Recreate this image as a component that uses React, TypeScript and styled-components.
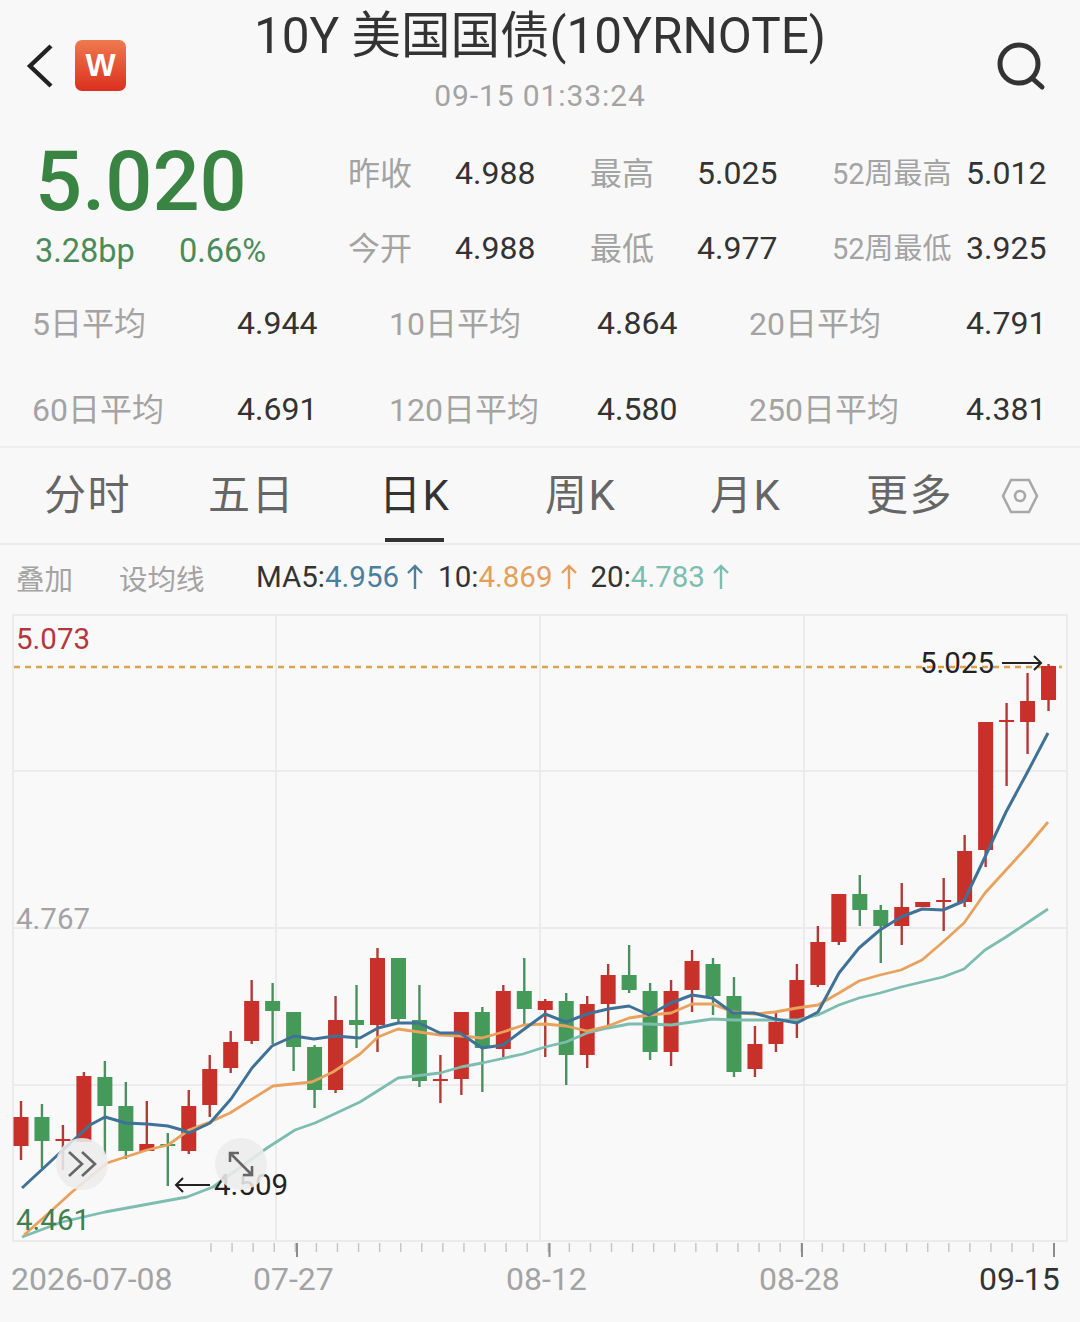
import React from "react";
import styled, { createGlobalStyle } from "styled-components";

const GlobalStyle = createGlobalStyle`
  html, body {
    margin: 0;
    padding: 0;
    background: #f8f8f8;
  }
  * {
    box-sizing: border-box;
  }
`;

const FONT = `Roboto, "Noto Sans CJK SC", sans-serif`;

const Page = styled.div`
  width: 1080px;
  height: 1322px;
  overflow: hidden;
  background: #f8f8f8;
  font-family: ${FONT};
  color: #333;
`;

/* header */
const Header = styled.header`
  height: 128px;
  display: grid;
  grid-template-columns: 200px 1fr 200px;
`;
const HeaderLeft = styled.div`
  display: flex;
  align-items: center;
  gap: 21px;
  padding: 40px 0 0 26px;
  height: 91px;
`;
const Logo = styled.div`
  width: 51px;
  height: 51px;
  border-radius: 7px;
  background: linear-gradient(180deg, #ee7a4e 0%, #dc2f1e 100%);
  color: #fff;
  display: flex;
  align-items: center;
  justify-content: center;
  font-family: "Liberation Sans", sans-serif;
  font-weight: 700;
  font-size: 32px;
`;
const TitleBlock = styled.div`
  display: flex;
  flex-direction: column;
  align-items: center;
`;
const Title = styled.div`
  font-size: 49.5px;
  line-height: 60px;
  margin-top: 6px;
  white-space: nowrap;
  color: #333;
`;
const Clock = styled.div`
  font-size: 30px;
  line-height: 36px;
  margin-top: 12px;
  letter-spacing: 0.9px;
  color: #a3a3a3;
`;
const HeaderRight = styled.div`
  display: flex;
  justify-content: flex-end;
  padding: 41px 34px 0 0;
`;

/* quote */
const QuoteRow = styled.section`
  height: 152px;
  display: flex;
`;
const PriceBlock = styled.div`
  width: 348px;
  padding-left: 35px;
  color: #3a8443;
`;
const Price = styled.div`
  font-size: 83px;
  font-weight: 500;
  line-height: 96px;
  margin-top: 6px;
`;
const ChangeRow = styled.div`
  display: flex;
  gap: 44px;
  font-size: 32.5px;
  line-height: 40px;
  margin-top: 1px;
  color: #4b8b5a;
`;
const StatGrid = styled.div`
  display: grid;
  grid-template-columns: 107px 135px 107px 135px 134px auto;
  grid-auto-rows: 75px;
  padding-top: 7px;
  align-items: center;
`;
const Label = styled.span<{ $size?: number }>`
  font-size: ${(p) => p.$size ?? 32}px;
  color: #a3a3a3;
  white-space: nowrap;
  padding-bottom: 4px;
`;
const Value = styled.span`
  font-size: 32px;
  color: #333;
  white-space: nowrap;
`;
const AvgGrid = styled.section`
  display: grid;
  grid-template-columns: 205px 152px 208px 152px 217px auto;
  grid-auto-rows: 86px;
  padding-left: 32px;
  height: 168px;
  align-items: center;
  border-bottom: 2px solid #efefef;
`;

/* tabs */
const Tabs = styled.nav`
  height: 97px;
  position: relative;
  display: flex;
  align-items: center;
  padding-left: 44px;
  border-bottom: 2px solid #ececec;
`;
const Tab = styled.div<{ $width: number; $active?: boolean }>`
  width: ${(p) => p.$width}px;
  font-size: 42px;
  line-height: 60px;
  letter-spacing: 1.5px;
  color: ${(p) => (p.$active ? "#333" : "#666")};
  position: relative;
  white-space: nowrap;
`;
const TabBar = styled.div`
  position: absolute;
  left: 6px;
  top: 72px;
  width: 59px;
  height: 4px;
  background: #333;
`;
const TabGear = styled.div`
  display: flex;
  margin-left: -3px;
`;

/* ma legend */
const Legend = styled.div`
  height: 69px;
  display: flex;
  align-items: center;
  padding: 0 0 5px 16px;
  font-size: 29.5px;
  white-space: nowrap;
`;
const LegendAction = styled.span<{ $width: number }>`
  width: ${(p) => p.$width}px;
  font-size: 28.5px;
  color: #a3a3a3;
`;
const MaItem = styled.span<{ $color: string; $gap: number }>`
  display: inline-flex;
  align-items: center;
  margin-right: ${(p) => p.$gap}px;
  color: #333;
  b {
    font-weight: 400;
    color: ${(p) => p.$color};
  }
  svg {
    margin-left: 7px;
  }
`;

/* chart */
const ChartFrame = styled.div`
  position: relative;
  width: 1056px;
  height: 628px;
  margin: 0 0 0 12px;
`;
const ChartSvg = styled.svg`
  display: block;
`;
const ChartLabel = styled.span<{ $x: number; $y: number; $color: string }>`
  position: absolute;
  left: ${(p) => p.$x}px;
  top: ${(p) => p.$y}px;
  font-size: 29.5px;
  line-height: 36px;
  color: ${(p) => p.$color};
  display: inline-flex;
  align-items: center;
  white-space: nowrap;
`;
const FloatButton = styled.div<{ $x: number; $y: number }>`
  position: absolute;
  left: ${(p) => p.$x}px;
  top: ${(p) => p.$y}px;
  width: 52px;
  height: 52px;
  border-radius: 50%;
  background: rgba(236, 236, 236, 0.88);
  display: flex;
  align-items: center;
  justify-content: center;
`;

/* axis */
const AxisTicks = styled.svg`
  display: block;
`;
const AxisLabels = styled.div`
  display: flex;
  padding-left: 11px;
  margin-top: 3px;
`;
const AxisLabel = styled.span<{ $width: number; $dark?: boolean }>`
  width: ${(p) => p.$width}px;
  font-size: 32px;
  line-height: 36px;
  color: ${(p) => (p.$dark ? "#333" : "#a3a3a3")};
  white-space: nowrap;
`;

// top, bottom, wick top, wick bottom, red?
type Candle = [number, number, number, number, boolean];
const candles: Candle[] = [
  [1117, 1146, 1101, 1160, true],
  [1117, 1141, 1104, 1168, false],
  [1139, 1141, 1125, 1170, true],
  [1076, 1142, 1072, 1142, true],
  [1077, 1106, 1061, 1155, false],
  [1106, 1151, 1082, 1159, false],
  [1144, 1151, 1101, 1151, true],
  [1144, 1146, 1133, 1186, false],
  [1106, 1151, 1090, 1154, true],
  [1069, 1105, 1055, 1117, true],
  [1042, 1068, 1031, 1073, true],
  [1001, 1041, 980, 1044, true],
  [1001, 1011, 983, 1044, false],
  [1012, 1047, 1012, 1071, false],
  [1047, 1090, 1045, 1108, false],
  [1020, 1090, 996, 1093, true],
  [1020, 1025, 985, 1048, false],
  [958, 1025, 948, 1052, true],
  [958, 1019, 958, 1023, false],
  [1020, 1081, 985, 1087, false],
  [1079, 1081, 1055, 1103, true],
  [1012, 1079, 1012, 1095, true],
  [1012, 1048, 1007, 1092, false],
  [991, 1049, 985, 1057, true],
  [991, 1009, 958, 1025, false],
  [1001, 1010, 999, 1057, true],
  [1001, 1055, 993, 1085, false],
  [1004, 1055, 996, 1068, true],
  [975, 1004, 964, 1025, true],
  [975, 990, 945, 993, false],
  [991, 1052, 983, 1060, false],
  [991, 1052, 980, 1066, true],
  [961, 990, 950, 1012, true],
  [964, 996, 958, 1015, false],
  [996, 1072, 977, 1077, false],
  [1044, 1069, 1026, 1077, true],
  [1022, 1044, 1012, 1052, true],
  [980, 1019, 964, 1038, true],
  [942, 985, 926, 987, true],
  [894, 942, 894, 945, true],
  [894, 910, 875, 926, false],
  [910, 926, 905, 963, false],
  [907, 926, 883, 945, true],
  [902, 907, 902, 907, true],
  [900, 902, 878, 931, true],
  [851, 902, 835, 907, true],
  [722, 850, 722, 867, true],
  [720, 722, 703, 786, true],
  [701, 722, 673, 754, true],
  [666, 700, 664, 711, true],
];

const ma5 =
  "22,1188 77,1137 90,1125 105,1117 126,1123 147,1124 168,1126 182,1130 189,1133 210,1123 231,1099 252,1068 272,1046 294,1036 314,1039 335,1036 360,1038 378,1028 398,1023 419,1023 440,1033 460,1033 482,1048 503,1045 523,1030 545,1014 566,1022 587,1014 608,1009 629,1006 649,1015 671,1003 692,995 712,998 733,1013 754,1013 775,1019 797,1023 818,1012 839,973 859,948 880,930 901,917 922,909 943,910 964,901 985,857 1006,812 1027,773 1048,733";
const ma10 =
  "24,1235 50,1212 72,1192 107,1163 147,1150 168,1145 189,1130 210,1122 230,1113 273,1086 312,1082 333,1072 360,1054 378,1037 398,1029 419,1032 440,1035 461,1036 482,1038 503,1032 524,1025 545,1024 566,1026 587,1031 608,1026 629,1018 649,1015 671,1013 692,1004 712,1004 733,1012 754,1014 775,1012 797,1008 818,1005 839,993 859,981 880,975 901,970 922,960 943,942 964,923 985,893 1006,870 1027,847 1048,822";
const ma20 =
  "22,1237 62,1222 105,1212 187,1197 213,1187 267,1148 295,1130 315,1123 360,1102 398,1078 440,1073 461,1067 482,1063 523,1054 545,1047 566,1042 587,1033 608,1028 629,1024 649,1024 671,1025 692,1022 712,1019 734,1020 754,1020 797,1020 818,1015 839,1005 859,998 880,993 901,987 922,982 943,977 964,969 985,950 1006,937 1027,923 1048,909";

const ticks = Array.from({ length: 41 }, (_, i) => 211 + i * 21.08);

const UpArrow: React.FC<{ color: string }> = ({ color }) => (
  <svg width="18" height="26" viewBox="0 0 18 26" fill="none" stroke={color} strokeWidth="2.4">
    <path d="M9 25V2M2 9l7-7 7 7" />
  </svg>
);

const Chart: React.FC = () => (
  <ChartSvg width="1056" height="628" viewBox="12 614 1056 628">
    <rect x="13" y="615" width="1054" height="626" fill="#f9f9f9" stroke="#ebebeb" strokeWidth="2" />
    {[771, 928, 1085].map((y) => (
      <line key={y} x1="13" x2="1067" y1={y} y2={y} stroke="#ebebeb" strokeWidth="2" />
    ))}
    {[276, 540, 804].map((x) => (
      <line key={x} x1={x} x2={x} y1="615" y2="1241" stroke="#ebebeb" strokeWidth="2" />
    ))}
    <line x1="14" x2="1062" y1="667" y2="667" stroke="#dca24e" strokeWidth="2.6" strokeDasharray="6 5" />
    {candles.map(([top, bottom, wickTop, wickBottom, red], i) => {
      const cx = 21 + i * 20.97;
      return (
        <g key={i}>
          <line x1={cx} x2={cx} y1={wickTop} y2={wickBottom} stroke={red ? "#b23a36" : "#4c8f60"} strokeWidth="2.4" />
          <rect x={cx - 7.5} y={top} width="15" height={bottom - top} fill={red ? "#c8302a" : "#459a5a"} />
        </g>
      );
    })}
    <polyline points={ma20} fill="none" stroke="#7dbdb0" strokeWidth="2.8" strokeLinejoin="round" />
    <polyline points={ma10} fill="none" stroke="#e8a25e" strokeWidth="2.8" strokeLinejoin="round" />
    <polyline points={ma5} fill="none" stroke="#3f7296" strokeWidth="3" strokeLinejoin="round" />
  </ChartSvg>
);

const App: React.FC = () => (
  <Page>
    <GlobalStyle />
    <Header>
      <HeaderLeft>
        <svg width="28" height="46" viewBox="0 0 28 46" fill="none" stroke="#222" strokeWidth="4.4">
          <path d="M25 3L4 23l21 20" />
        </svg>
        <Logo>W</Logo>
      </HeaderLeft>
      <TitleBlock>
        <Title>10Y 美国国债(10YRNOTE)</Title>
        <Clock>09-15 01:33:24</Clock>
      </TitleBlock>
      <HeaderRight>
        <svg width="50" height="50" viewBox="0 0 50 50" fill="none" stroke="#333" strokeWidth="5" strokeLinecap="round">
          <circle cx="23" cy="23" r="19" />
          <path d="M37 38l9 8" />
        </svg>
      </HeaderRight>
    </Header>

    <QuoteRow>
      <PriceBlock>
        <Price>5.020</Price>
        <ChangeRow>
          <span>3.28bp</span>
          <span>0.66%</span>
        </ChangeRow>
      </PriceBlock>
      <StatGrid>
        <Label>昨收</Label>
        <Value>4.988</Value>
        <Label>最高</Label>
        <Value>5.025</Value>
        <Label $size={29}>52周最高</Label>
        <Value>5.012</Value>
        <Label>今开</Label>
        <Value>4.988</Value>
        <Label>最低</Label>
        <Value>4.977</Value>
        <Label $size={29}>52周最低</Label>
        <Value>3.925</Value>
      </StatGrid>
    </QuoteRow>

    <AvgGrid>
      <Label>5日平均</Label>
      <Value>4.944</Value>
      <Label>10日平均</Label>
      <Value>4.864</Value>
      <Label>20日平均</Label>
      <Value>4.791</Value>
      <Label>60日平均</Label>
      <Value>4.691</Value>
      <Label>120日平均</Label>
      <Value>4.580</Value>
      <Label>250日平均</Label>
      <Value>4.381</Value>
    </AvgGrid>

    <Tabs>
      <Tab $width={164}>分时</Tab>
      <Tab $width={171}>五日</Tab>
      <Tab $width={166} $active>
        日K
        <TabBar />
      </Tab>
      <Tab $width={165}>周K</Tab>
      <Tab $width={156}>月K</Tab>
      <Tab $width={138}>更多</Tab>
      <TabGear>
        <svg width="38" height="36" viewBox="0 0 38 36" fill="none" stroke="#a8a8a8" strokeWidth="2.6">
          <path d="M10 2h18l8 16-8 16H10L2 18z" />
          <circle cx="19" cy="18" r="5" />
        </svg>
      </TabGear>
    </Tabs>

    <Legend>
      <LegendAction $width={103}>叠加</LegendAction>
      <LegendAction $width={137}>设均线</LegendAction>
      <MaItem $color="#4a7f9e" $gap={14}>
        MA5:<b>4.956</b>
        <UpArrow color="#4a7f9e" />
      </MaItem>
      <MaItem $color="#e3a05c" $gap={13}>
        10:<b>4.869</b>
        <UpArrow color="#e3a05c" />
      </MaItem>
      <MaItem $color="#7dbdb0" $gap={0}>
        20:<b>4.783</b>
        <UpArrow color="#7dbdb0" />
      </MaItem>
    </Legend>

    <ChartFrame>
      <Chart />
      <ChartLabel $x={4} $y={7} $color="#b5373c">5.073</ChartLabel>
      <ChartLabel $x={4} $y={287} $color="#a3a3a3">4.767</ChartLabel>
      <ChartLabel $x={4} $y={588} $color="#3f8050">4.461</ChartLabel>
      <ChartLabel $x={908} $y={31} $color="#222">
        5.025
        <svg width="42" height="16" viewBox="0 0 42 16" fill="none" stroke="#222" strokeWidth="2" style={{ marginLeft: 8 }}>
          <path d="M0 8h39M32 1l7 7-7 7" />
        </svg>
      </ChartLabel>
      <ChartLabel $x={162} $y={553} $color="#222">
        <svg width="36" height="16" viewBox="0 0 36 16" fill="none" stroke="#222" strokeWidth="2" style={{ marginRight: 4 }}>
          <path d="M36 8H2M9 1L2 8l7 7" />
        </svg>
        4.509
      </ChartLabel>
      <FloatButton $x={44} $y={524}>
        <svg width="30" height="28" viewBox="0 0 30 28" fill="none" stroke="#666" strokeWidth="2.6">
          <path d="M2 2l13 12L2 26M15 2l13 12-13 12" />
        </svg>
      </FloatButton>
      <FloatButton $x={203} $y={524}>
        <svg width="28" height="28" viewBox="0 0 28 28" fill="none" stroke="#666" strokeWidth="2.6">
          <path d="M3 3l22 22M3 12V3h9M25 16v9h-9" />
        </svg>
      </FloatButton>
    </ChartFrame>

    <AxisTicks width="1080" height="16" viewBox="0 1242 1080 16">
      {ticks.map((x) => (
        <line key={x} x1={x} x2={x} y1="1243" y2="1252" stroke="#c4c4c4" strokeWidth="1.4" />
      ))}
      {[297, 549.5, 802, 1054].map((x) => (
        <line key={x} x1={x} x2={x} y1="1243" y2="1257" stroke="#8c8c8c" strokeWidth="2" />
      ))}
    </AxisTicks>
    <AxisLabels>
      <AxisLabel $width={242}>2026-07-08</AxisLabel>
      <AxisLabel $width={253}>07-27</AxisLabel>
      <AxisLabel $width={253}>08-12</AxisLabel>
      <AxisLabel $width={220}>08-28</AxisLabel>
      <AxisLabel $width={80} $dark>09-15</AxisLabel>
    </AxisLabels>
  </Page>
);

export default App;
